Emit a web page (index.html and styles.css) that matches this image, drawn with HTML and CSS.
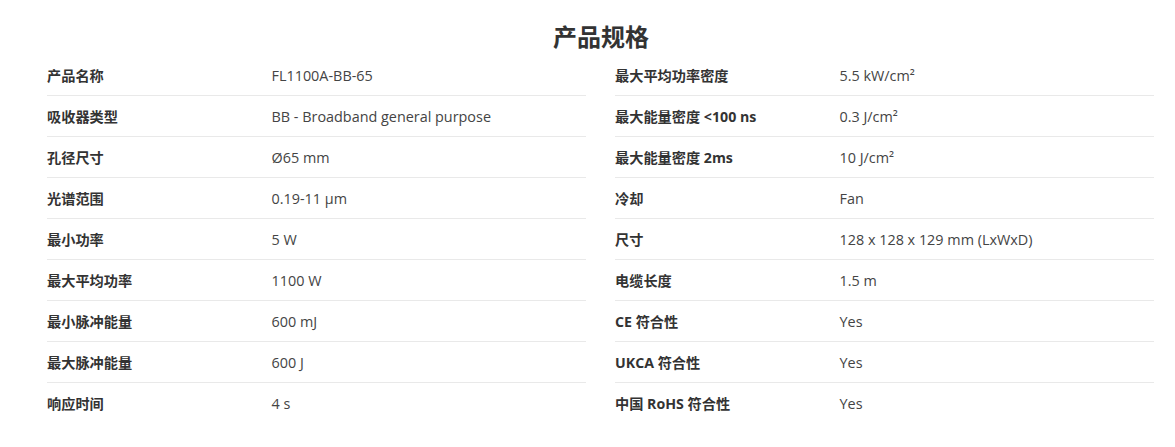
FILE: index.html
```html
<!DOCTYPE html>
<html lang="zh">
<head>
<meta charset="utf-8">
<link rel="stylesheet" href="styles.css">
</head>
<body>
<section class="specs">
  <h2 class="title">产品规格</h2>
  <div class="cols">
    <div class="table">
      <div class="row"><div class="label">产品名称</div><div class="value">FL1100A-BB-65</div></div>
      <div class="row"><div class="label">吸收器类型</div><div class="value">BB - Broadband general purpose</div></div>
      <div class="row"><div class="label">孔径尺寸</div><div class="value">Ø65 mm</div></div>
      <div class="row"><div class="label">光谱范围</div><div class="value">0.19-11 µm</div></div>
      <div class="row"><div class="label">最小功率</div><div class="value">5 W</div></div>
      <div class="row"><div class="label">最大平均功率</div><div class="value">1100 W</div></div>
      <div class="row"><div class="label">最小脉冲能量</div><div class="value">600 mJ</div></div>
      <div class="row"><div class="label">最大脉冲能量</div><div class="value">600 J</div></div>
      <div class="row"><div class="label">响应时间</div><div class="value">4 s</div></div>
    </div>
    <div class="table">
      <div class="row"><div class="label">最大平均功率密度</div><div class="value">5.5 kW/cm²</div></div>
      <div class="row"><div class="label">最大能量密度 &lt;100 ns</div><div class="value">0.3 J/cm²</div></div>
      <div class="row"><div class="label">最大能量密度 2ms</div><div class="value">10 J/cm²</div></div>
      <div class="row"><div class="label">冷却</div><div class="value">Fan</div></div>
      <div class="row"><div class="label">尺寸</div><div class="value">128 x 128 x 129 mm (LxWxD)</div></div>
      <div class="row"><div class="label">电缆长度</div><div class="value">1.5 m</div></div>
      <div class="row"><div class="label">CE 符合性</div><div class="value">Yes</div></div>
      <div class="row"><div class="label">UKCA 符合性</div><div class="value">Yes</div></div>
      <div class="row"><div class="label">中国 RoHS 符合性</div><div class="value">Yes</div></div>
    </div>
  </div>
</section>
</body>
</html>
```
FILE: styles.css
```css
html, body {
  margin: 0;
  padding: 0;
  background: #ffffff;
}
body {
  font-family: "Open Sans", "Noto Sans CJK SC", sans-serif;
  color: #333333;
  font-size: 14px;
}
.specs {
  width: 1108px;
  margin-left: 47px;
  padding-top: 20px;
}
.title {
  margin: 0;
  text-align: center;
  font-size: 24px;
  font-weight: 700;
  line-height: 34px;
  color: #333333;
}
.cols {
  display: grid;
  grid-template-columns: 539px 539px;
  column-gap: 29px;
  margin-top: 1px;
}
.table {
  display: flex;
  flex-direction: column;
}
.row {
  display: grid;
  grid-template-columns: 224.5px 1fr;
  height: 40px;
  align-items: center;
  border-bottom: 1px solid #e9e9e9;
}
.row:last-child {
  border-bottom: none;
}
.label {
  font-weight: 700;
  font-size: 14.2px;
  color: #333333;
}
.value {
  font-size: 14.4px;
  color: #444444;
}
```
